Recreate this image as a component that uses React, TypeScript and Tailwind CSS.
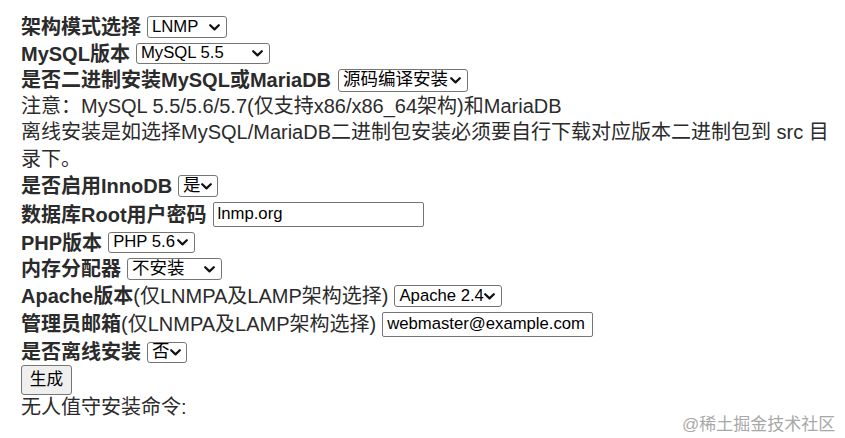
import React from "react";

const FONT = '"Liberation Sans", Arial, "Noto Sans CJK SC", sans-serif';

function Chevron() {
  return (
    <svg width="11" height="7" viewBox="0 0 11 7" className="shrink-0">
      <path d="M1.2 1.2 L5.5 5.4 L9.8 1.2" fill="none" stroke="#111" strokeWidth="2.2" strokeLinecap="round" strokeLinejoin="round" />
    </svg>
  );
}

function Sel({ text, w, h = 22, cjk = false }: { text: string; w: number; h?: number; cjk?: boolean }) {
  return (
    <div
      className={
        cjk
          ? "flex items-center justify-between border border-[#767676] rounded-[3px] bg-white pl-[4px] pr-[6px] text-[17.5px] text-black shrink-0"
          : "flex items-center justify-between border border-[#767676] rounded-[3px] bg-white pl-[4px] pr-[6px] text-[16.7px] text-black shrink-0"
      }
      style={{ width: w, height: h }}
    >
      <span className="whitespace-nowrap leading-none">{text}</span>
      <Chevron />
    </div>
  );
}

function Inp({ text, w }: { text: string; w: number }) {
  return (
    <div
      className="flex items-center border border-[#767676] rounded-[2px] bg-white pl-[4px] text-[16.7px] text-black shrink-0 h-[25px]"
      style={{ width: w }}
    >
      <span className="whitespace-nowrap leading-none">{text}</span>
    </div>
  );
}

function Row({ h, children, gap = 6 }: { h: number; children: React.ReactNode; gap?: number }) {
  return (
    <div className="flex items-center whitespace-nowrap" style={{ height: h, gap }}>
      {children}
    </div>
  );
}

export default function App() {
  return (
    <div
      className="relative w-[845px] h-[438px] bg-white text-[#2b2b2b] text-[20px] overflow-hidden"
      style={{ fontFamily: FONT }}
    >
      <div className="pl-[21px] pt-[14px] flex flex-col">
        <Row h={26}>
          <b>架构模式选择</b>
          <Sel text="LNMP" w={80} />
        </Row>
        <Row h={27}>
          <b>MySQL版本</b>
          <Sel text="MySQL 5.5" w={134} h={21} />
        </Row>
        <Row h={26} gap={7}>
          <b>是否二进制安装MySQL或MariaDB</b>
          <Sel text="源码编译安装" w={130} h={23} cjk />
        </Row>
        <Row h={26}>
          <span>注意：MySQL 5.5/5.6/5.7(仅支持x86/x86_64架构)和MariaDB</span>
        </Row>
        <Row h={26}>
          <span>离线安装是如选择MySQL/MariaDB二进制包安装必须要自行下载对应版本二进制包到 src 目</span>
        </Row>
        <Row h={27}>
          <span>录下。</span>
        </Row>
        <Row h={28}>
          <b>是否启用InnoDB</b>
          <Sel text="是" w={40} cjk />
        </Row>
        <Row h={29}>
          <b>数据库Root用户密码</b>
          <Inp text="lnmp.org" w={211} />
        </Row>
        <Row h={27}>
          <b>PHP版本</b>
          <Sel text="PHP 5.6" w={87} h={21} />
        </Row>
        <Row h={26}>
          <b>内存分配器</b>
          <Sel text="不安装" w={95} cjk />
        </Row>
        <Row h={28}>
          <span>
            <b>Apache版本</b>(仅LNMPA及LAMP架构选择)
          </span>
          <Sel text="Apache 2.4" w={108} />
        </Row>
        <Row h={28}>
          <span>
            <b>管理员邮箱</b>(仅LNMPA及LAMP架构选择)
          </span>
          <Inp text="webmaster@example.com" w={211} />
        </Row>
        <Row h={28}>
          <b>是否离线安装</b>
          <Sel text="否" w={40} h={21} cjk />
        </Row>
        <Row h={27}>
          <div className="flex items-center justify-center w-[51px] h-[30px] border border-[#767676] rounded-[3px] bg-[#efefef] text-[16.7px] text-black">
            生成
          </div>
        </Row>
        <Row h={27}>
          <span>无人值守安装命令:</span>
        </Row>
      </div>
      <div className="absolute left-[682px] top-[412px] text-[17px] text-[#a8a8a8] whitespace-nowrap">
        @稀土掘金技术社区
      </div>
    </div>
  );
}
